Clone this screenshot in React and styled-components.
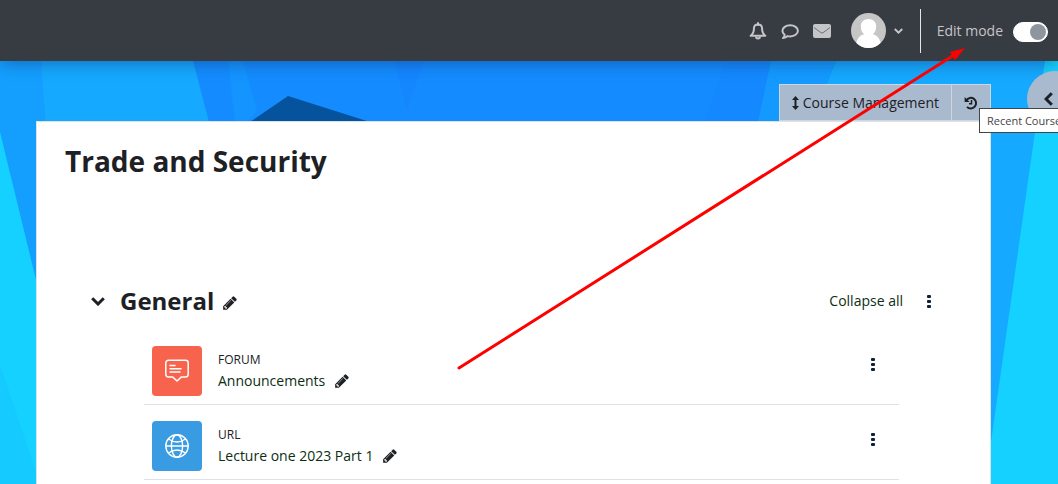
import styled, { createGlobalStyle } from 'styled-components';

const GlobalStyle = createGlobalStyle`
    * {
        box-sizing: border-box;
    }

    body {
        margin: 0;
        overflow: hidden;
        color: #1d2125;
        font-family: 'Open Sans', 'Segoe UI', sans-serif;
        font-size: 14px;
        line-height: 22px;
    }

    button {
        padding: 0;
        border: 0;
        background: none;
        color: inherit;
        font: inherit;
        cursor: pointer;
    }

    a {
        color: #0b2e13;
        text-decoration: none;
    }
`;

const Page = styled.div`
    position: relative;
    min-height: 100vh;
    overflow: hidden;
`;

const Backdrop = styled.svg`
    position: absolute;
    inset: 0;
    z-index: -1;
    width: 100%;
    height: 100%;
`;

const Navbar = styled.header`
    display: flex;
    align-items: center;
    justify-content: flex-end;
    height: 61px;
    padding-right: 10px;
    background: #373b42;
    color: #c4c5c8;
    box-shadow: 0 2px 16px rgba(20, 40, 90, 0.45);
`;

const NavIcons = styled.nav`
    display: flex;
    gap: 12px;
    margin-right: 19px;
`;

const IconButton = styled.button`
    display: flex;
    align-items: center;
    justify-content: center;
    width: 20px;
    height: 20px;
`;

const UserMenu = styled.button`
    display: flex;
    align-items: center;
    gap: 8px;
    margin-right: 17px;
`;

const EditMode = styled.label`
    display: flex;
    align-items: center;
    gap: 10px;
    height: 44px;
    padding-left: 16px;
    border-left: 1px solid #e4e5e7;
`;

const Switch = styled.input`
    appearance: none;
    display: flex;
    align-items: center;
    justify-content: flex-end;
    width: 35px;
    height: 20px;
    margin: 2px 0 0;
    padding: 1px;
    border: 1px solid #fff;
    border-radius: 10px;
    background: #fff;

    &::before {
        content: '';
        width: 16px;
        height: 16px;
        border-radius: 50%;
        background: #8f959e;
    }
`;

const Main = styled.main`
    margin: 23px 67px 0 36px;
`;

const Tabs = styled.div`
    display: flex;
    justify-content: flex-end;
    height: 37px;
`;

const Tab = styled.button`
    display: flex;
    align-items: center;
    gap: 4px;
    padding: 0 12px;
    border: 1px solid #ced6e0;
    border-left-width: ${(props) => (props.$last ? '0' : '1px')};
    background: #a9b9ce;
`;

const Course = styled.div`
    min-height: calc(100vh - 121px);
    padding: 21px 51px 0 28px;
    border: 1px solid #dee2e6;
    border-bottom: 0;
    background: #fff;
`;

const CourseTitle = styled.h1`
    margin: 0 0 100px;
    font-size: 28px;
    line-height: 36px;
`;

const SectionHeader = styled.div`
    display: flex;
    align-items: center;
    height: 44px;
    padding-left: 23px;
`;

const SectionTitle = styled.h2`
    display: flex;
    align-items: center;
    gap: 6px;
    margin: 0 0 0 12px;
    font-size: 24px;
    line-height: 36px;

    button {
        margin-top: 4px;
    }
`;

const CollapseLink = styled.a`
    margin: 0 16px 0 auto;
`;

const Activities = styled.ul`
    margin: 7px 40px 0 79px;
    padding: 0;
    list-style: none;
`;

const Activity = styled.li`
    display: flex;
    height: 75px;
    padding: 16px 16px 0 8px;
    border-bottom: 1px solid #dee2e6;
`;

const ActivityIcon = styled.span`
    display: flex;
    align-items: center;
    justify-content: center;
    width: 50px;
    height: 50px;
    margin-right: 16px;
    border-radius: 4px;
    background: ${(props) => props.$color};
`;

const ActivityText = styled.div`
    padding-top: 4px;
    margin-right: auto;
`;

const ActivityType = styled.div`
    font-size: 12px;
    line-height: 20px;
    text-transform: uppercase;
`;

const ActivityName = styled.div`
    display: flex;
    align-items: center;
    gap: 7px;
`;

const KebabButton = styled(IconButton)`
    margin-top: ${(props) => (props.$row ? '8px' : '0')};
    color: #0f2139;
`;

const DrawerToggle = styled.button`
    position: absolute;
    top: 71px;
    right: -25px;
    display: flex;
    align-items: center;
    width: 56px;
    height: 56px;
    padding-left: 17px;
    border-radius: 50%;
    background: #a9b9ce;
`;

const Tooltip = styled.div`
    position: absolute;
    top: 108px;
    left: calc(100% - 79px);
    padding: 0 7px;
    border: 1px solid #444;
    background: #fff;
    color: #444;
    font-size: 11px;
    line-height: 23px;
    white-space: nowrap;
`;

const Arrow = styled.svg`
    position: absolute;
    top: 44px;
    right: 92px;
    pointer-events: none;
`;

function BellIcon() {
    return (
        <svg width="18" height="18" viewBox="0 0 18 18" fill="none" stroke="currentColor" strokeWidth="2" strokeLinejoin="round">
            <path d="M9 2.600C6.500 2.600 4.900 4.400 4.900 6.800c0 3.500-.9 5.300-3.200 7h14.600c-2.300-1.700-3.200-3.500-3.200-7C13.100 4.400 11.500 2.600 9 2.600z" />
            <path d="M9 1v2" strokeLinecap="round" />
            <path d="M7 14.500a2 2 0 0 0 4 0" />
        </svg>
    );
}

function CommentIcon() {
    return (
        <svg width="18" height="18" viewBox="0 0 18 18" fill="none" stroke="currentColor" strokeWidth="2" strokeLinejoin="round">
            <path d="M9.200 3.200c4.300 0 7.700 2.500 7.700 5.600s-3.400 5.600-7.700 5.600c-.9 0-1.700-.1-2.500-.3-1.300 1.100-2.900 1.800-4.700 2 .9-.9 1.500-1.900 1.700-3.200C2.300 11.900 1.400 10.400 1.400 8.800c0-3.100 3.500-5.600 7.800-5.600z" />
        </svg>
    );
}

function MailIcon() {
    return (
        <svg width="18" height="16" viewBox="0 0 18 16">
            <rect y="1" width="18" height="14" rx="2" fill="currentColor" />
            <path d="M1 4.500l7 5.200q1 .7 2 0l7-5.200" fill="none" stroke="#70737a" />
        </svg>
    );
}

function Avatar() {
    return (
        <svg width="35" height="35" viewBox="0 0 35 35">
            <clipPath id="avatar">
                <circle cx="17.500" cy="17.500" r="17.500" />
            </clipPath>
            <g clipPath="url(#avatar)">
                <rect width="35" height="35" fill="#c6c6c6" />
                <path d="M17.500 6c4.800 0 7.700 3.200 7.700 7.500 0 3.300-1.200 6-3.400 7.700 4.700 1.200 8 4.500 8.700 13.800h-26c.7-9.300 4-12.600 8.700-13.800-2.200-1.700-3.400-4.400-3.400-7.700C9.800 9.200 12.700 6 17.500 6z" fill="#fff" />
            </g>
        </svg>
    );
}

function Chevron({ width, height, direction }) {
    return (
        <svg width={width} height={height} viewBox={direction === 'left' ? '0 0 9 14' : '0 0 14 9'} fill="none" stroke="currentColor" strokeWidth="3">
            <path d={direction === 'left' ? 'M7.800 1.200L2 7l5.800 5.800' : 'M1.200 1.300L7 7l5.800-5.700'} />
        </svg>
    );
}

function PencilIcon() {
    return (
        <svg width="16" height="16" viewBox="0 0 1792 1792" fill="currentColor">
            <path d="M491 1536l91-91-235-235-91 91v107h128v128h107zm523-928q0-22-22-22-10 0-17 7l-542 542q-7 7-7 17 0 22 22 22 10 0 17-7l542-542q7-7 7-17zm-54-192l416 416-832 832h-416v-416zm683 96q0 53-37 90l-166 166-416-416 166-165q36-38 90-38 53 0 91 38l235 234q37 39 37 91z" />
        </svg>
    );
}

function HistoryIcon() {
    return (
        <svg width="14" height="14" viewBox="0 0 14 14" fill="none" stroke="currentColor" strokeWidth="2">
            <path d="M2.300 4.300A5.300 5.300 0 1 1 3 10.900" />
            <path d="M7.500 4v3.700H5" strokeWidth="1.500" />
            <path d="M.6 1v5h5z" fill="currentColor" stroke="none" />
        </svg>
    );
}

function ArrowsIcon() {
    return (
        <svg width="7" height="14" viewBox="0 0 7 14" fill="currentColor">
            <path d="M3.500 0L7 4H4.500v6H7l-3.500 4L0 10h2.500V4H0z" />
        </svg>
    );
}

function KebabIcon() {
    return (
        <svg width="4" height="13" viewBox="0 0 4 13" fill="currentColor">
            <rect width="4" height="3" rx="1" />
            <rect y="5" width="4" height="3" rx="1" />
            <rect y="10" width="4" height="3" rx="1" />
        </svg>
    );
}

function ForumIcon() {
    return (
        <svg width="24" height="24" viewBox="0 0 24 24" fill="none" stroke="#fff" strokeWidth="1.500" strokeLinecap="round" strokeLinejoin="round">
            <path d="M3.500 1.200h17a2.700 2.700 0 0 1 2.700 2.700v11.300a2.700 2.700 0 0 1-2.700 2.700h-4L12 22l-4.500-4.100h-4a2.700 2.700 0 0 1-2.700-2.700V3.900a2.700 2.700 0 0 1 2.700-2.700z" />
            <path d="M5 6.500h5M5 9.700h11M5 13h10" />
        </svg>
    );
}

function GlobeIcon() {
    return (
        <svg width="24" height="24" viewBox="0 0 24 24" fill="none" stroke="#fff" strokeWidth="1.400">
            <circle cx="12" cy="12" r="11.200" />
            <ellipse cx="12" cy="12" rx="5.600" ry="11.200" />
            <path d="M.8 12h22.400M3.500 5q8.500 6 17 0M3.500 19q8.500-6 17 0" />
        </svg>
    );
}

const activities = [
    { type: 'Forum', name: 'Announcements', color: '#f7634d', Icon: ForumIcon },
    { type: 'URL', name: 'Lecture one 2023 Part 1', color: '#399be2', Icon: GlobeIcon },
];

export default function App() {
    return (
        <Page>
            <GlobalStyle />
            <Backdrop viewBox="0 0 1058 484" preserveAspectRatio="none" aria-hidden="true">
                <rect width="1058" height="484" fill="#148cff" />
                <path d="M0 61h41l6 61v362H0z" fill="#149fff" />
                <path d="M41 61h152l16 61v20H47z" fill="#15a9ff" />
                <path d="M228 61h15l14 50-10 11h-12z" fill="#1494ff" />
                <path d="M394 61h30l-17 50z" fill="#1487ff" />
                <path d="M726 61h45l-13 61h-54z" fill="#1489ff" />
                <path d="M771 61h65l-24 61h-54z" fill="#149aff" />
                <path d="M836 61h222v423H812V122z" fill="#15a9ff" />
                <path d="M1045 61h13v423h-67v-42z" fill="#14d1ff" />
                <path d="M0 132l37 152v200H0z" fill="#14d1ff" />
                <path d="M0 365l37 110v9H0z" fill="#14caff" />
                <path d="M250 122l38-26 82 26z" fill="#05539c" />
            </Backdrop>

            <Navbar>
                <NavIcons>
                    <IconButton aria-label="Notifications"><BellIcon /></IconButton>
                    <IconButton aria-label="Messages"><CommentIcon /></IconButton>
                    <IconButton aria-label="Mail"><MailIcon /></IconButton>
                </NavIcons>
                <UserMenu aria-label="User menu">
                    <Avatar />
                    <Chevron width="9" height="6" />
                </UserMenu>
                <EditMode>
                    Edit mode
                    <Switch type="checkbox" role="switch" defaultChecked />
                </EditMode>
            </Navbar>

            <Main>
                <Tabs>
                    <Tab><ArrowsIcon />Course Management</Tab>
                    <Tab $last aria-label="Recent courses"><HistoryIcon /></Tab>
                </Tabs>
                <Course>
                    <CourseTitle>Trade and Security</CourseTitle>
                    <SectionHeader>
                        <IconButton aria-label="Collapse section"><Chevron width="14" height="9" /></IconButton>
                        <SectionTitle>
                            General
                            <IconButton aria-label="Edit section name"><PencilIcon /></IconButton>
                        </SectionTitle>
                        <CollapseLink href="#">Collapse all</CollapseLink>
                        <KebabButton aria-label="Section actions"><KebabIcon /></KebabButton>
                    </SectionHeader>
                    <Activities>
                        {activities.map(({ type, name, color, Icon }) => (
                            <Activity key={name}>
                                <ActivityIcon $color={color}><Icon /></ActivityIcon>
                                <ActivityText>
                                    <ActivityType>{type}</ActivityType>
                                    <ActivityName>
                                        <a href="#">{name}</a>
                                        <IconButton aria-label={`Edit ${name}`}><PencilIcon /></IconButton>
                                    </ActivityName>
                                </ActivityText>
                                <KebabButton $row aria-label={`${name} actions`}><KebabIcon /></KebabButton>
                            </Activity>
                        ))}
                    </Activities>
                </Course>
            </Main>

            <DrawerToggle aria-label="Open block drawer"><Chevron width="9" height="14" direction="left" /></DrawerToggle>
            <Tooltip role="tooltip">Recent Courses</Tooltip>

            <Arrow width="510" height="328" viewBox="0 0 510 328" aria-hidden="true">
                <path d="M3 324L498 11" stroke="#fe0000" strokeWidth="3" strokeLinecap="round" />
                <path d="M509 4l-10 12-5-8z" fill="#fe0000" />
            </Arrow>
        </Page>
    );
}
